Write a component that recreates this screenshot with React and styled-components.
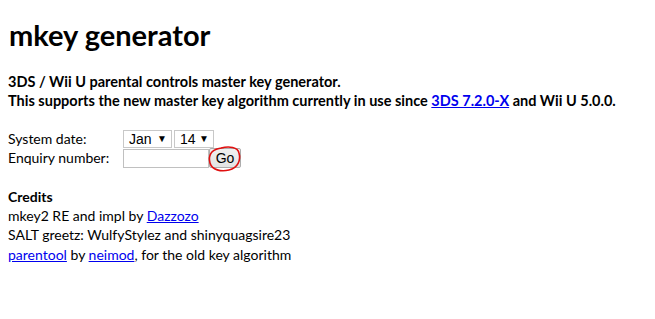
import React from "react";
import styled, { createGlobalStyle } from "styled-components";

const Global = createGlobalStyle`
  html, body { margin: 0; padding: 0; background: #fff; }
  body { padding: 8px; font-family: Lato, "Liberation Sans", sans-serif; font-size: 14px; color: #000; }
`;

const Title = styled.h1`
  font-size: 29px;
  font-weight: 700;
  margin: 9px 0 0 1px;
  line-height: 36px;
`;

const Intro = styled.p`
  font-weight: 700;
  font-size: 14.5px;
  line-height: 19px;
  margin: 19px 0 0 0;
`;

const Link = styled.a`
  color: #0000ee;
  text-decoration: underline;
`;

const Form = styled.div`
  display: grid;
  grid-template-columns: 115px auto;
  row-gap: 0;
  margin-top: 20px;
  align-items: center;
`;

const Label = styled.span`
  line-height: 18px;
`;

const Inline = styled.div`
  display: flex;
  align-items: center;
  gap: ${(p) => p.$gap}px;
`;

const SelectBox = styled.div`
  position: relative;
  width: ${(p) => p.$w}px;
  height: 18px;
  border: 1px solid #c8c8c8;
  box-sizing: border-box;
  background: #fff;
  font-family: "Liberation Sans", Arial, sans-serif;
  font-size: 14px;
  line-height: 16px;
  padding-left: 5px;
`;

const Arrow = styled.span`
  position: absolute;
  right: 4px;
  top: 0;
  font-size: 10px;
  line-height: 15px;
`;

const TextInput = styled.input`
  width: 86px;
  height: 19px;
  box-sizing: border-box;
  border: 1px solid #c0c0c0;
  margin: 0;
  padding: 0;
`;

const ButtonWrap = styled.span`
  position: relative;
  display: inline-block;
`;

const GoButton = styled.button`
  display: block;
  height: 20px;
  width: 32px;
  margin: 0;
  padding: 0;
  border: 1px solid #adadad;
  border-radius: 2px;
  background: linear-gradient(#f0f0f0, #e3e3e3);
  font-family: "Liberation Sans", Arial, sans-serif;
  font-size: 14px;
  color: #000;
`;

const Circle = styled.svg`
  position: absolute;
  left: -2px;
  top: -3px;
  pointer-events: none;
`;

const Credits = styled.div`
  margin-top: 19px;
  line-height: 19.2px;
`;

const CreditHead = styled.div`
  font-weight: 700;
`;

export default function App() {
  return (
    <>
      <Global />
      <Title>mkey generator</Title>
      <Intro>
        3DS / Wii U parental controls master key generator.
        <br />
        This supports the new master key algorithm currently in use since{" "}
        <Link href="#">3DS 7.2.0-X</Link> and Wii U 5.0.0.
      </Intro>
      <Form>
        <Label>System date:</Label>
        <Inline $gap={2}>
          <SelectBox $w={49}>
            Jan<Arrow>▼</Arrow>
          </SelectBox>
          <SelectBox $w={40}>
            14<Arrow>▼</Arrow>
          </SelectBox>
        </Inline>
        <Label>Enquiry number:</Label>
        <Inline $gap={0}>
          <TextInput />
          <ButtonWrap>
            <GoButton>Go</GoButton>
            <Circle width="36" height="28" viewBox="0 0 36 28">
              <path
                d="M14 3 C22 1 31 2 32 8 C34 15 31 23 22 25 C14 27 5 25 3 18 C1 11 4 5 12 3.5 L17 2.5"
                fill="none"
                stroke="#e01010"
                strokeWidth="1.6"
              />
            </Circle>
          </ButtonWrap>
        </Inline>
      </Form>
      <Credits>
        <CreditHead>Credits</CreditHead>
        <div>
          mkey2 RE and impl by <Link href="#">Dazzozo</Link>
        </div>
        <div>SALT greetz: WulfyStylez and shinyquagsire23</div>
        <div>
          <Link href="#">parentool</Link> by <Link href="#">neimod</Link>, for
          the old key algorithm
        </div>
      </Credits>
    </>
  );
}
